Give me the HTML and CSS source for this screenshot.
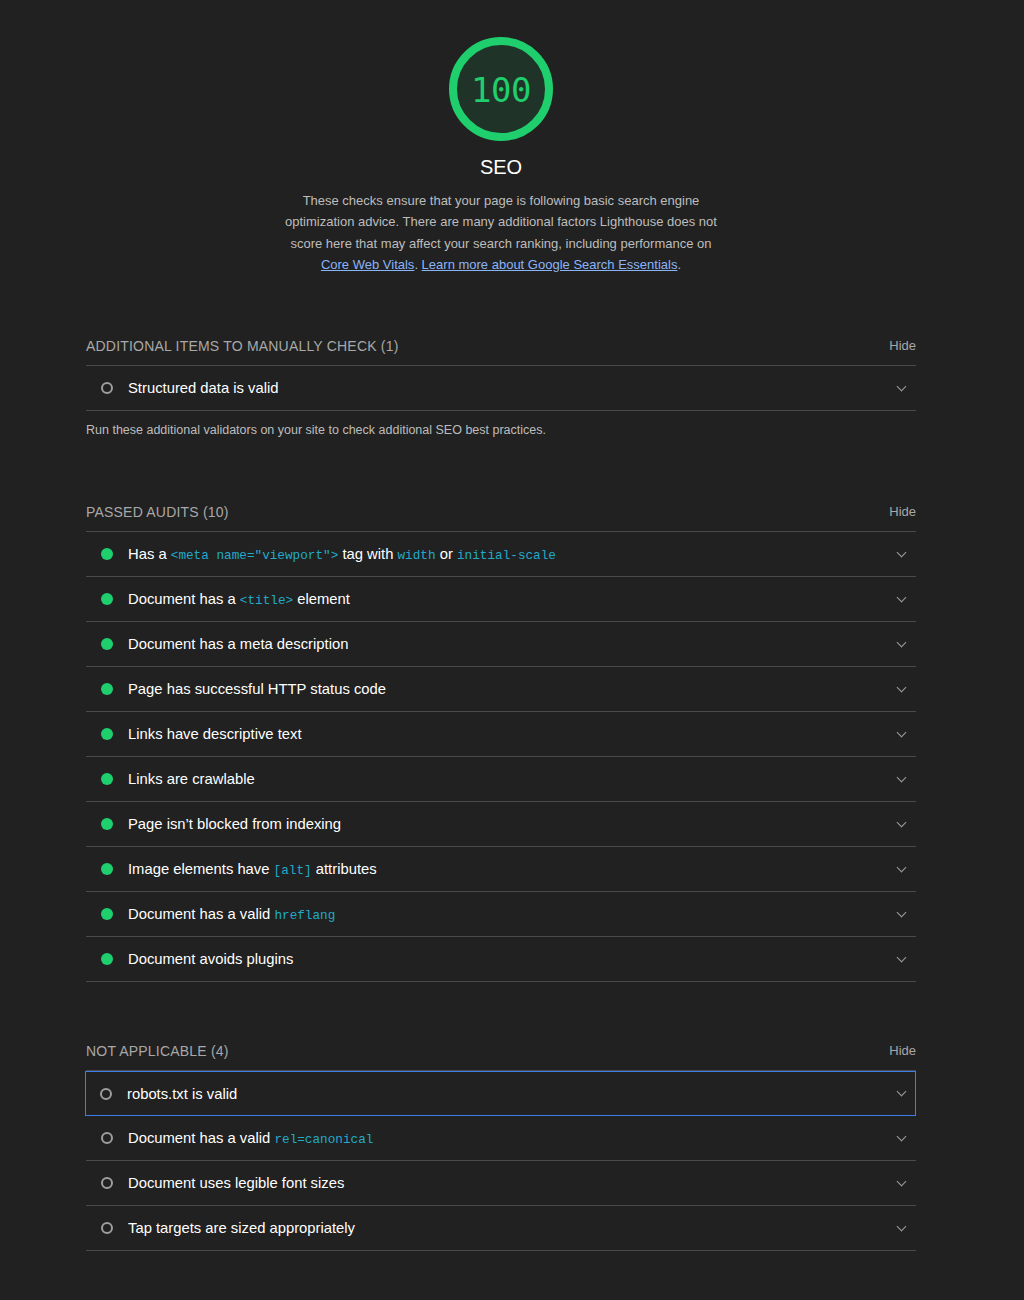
FILE: index.html
```html
<!DOCTYPE html>
<html lang="en">
<head>
<meta charset="utf-8">
<title>SEO</title>
<link rel="stylesheet" href="styles.css">
</head>
<body>
<div class="report">
  <header class="cat-header">
    <div class="gauge">
      <svg class="gauge-svg" viewBox="0 0 104 104" width="104" height="104">
        <circle cx="52" cy="52" r="48" fill="#203328" stroke="#1fce6c" stroke-width="8"/>
      </svg>
      <span class="gauge-value">100</span>
    </div>
    <h1 class="cat-title">SEO</h1>
    <p class="cat-desc">These checks ensure that your page is following basic search engine optimization advice. There are many additional factors Lighthouse does not score here that may affect your search ranking, including performance on <a href="#">Core Web Vitals</a>. <a href="#">Learn more about Google Search Essentials</a>.</p>
  </header>

  <section class="group group-first">
    <div class="group-head">
      <span class="group-title">Additional items to manually check (1)</span>
      <span class="group-hide">Hide</span>
    </div>
    <div class="audit"><span class="ico ico-na"></span><span class="audit-title">Structured data is valid</span><span class="chev"></span></div>
    <p class="group-desc">Run these additional validators on your site to check additional SEO best practices.</p>
  </section>

  <section class="group group-passed">
    <div class="group-head">
      <span class="group-title">Passed audits (10)</span>
      <span class="group-hide">Hide</span>
    </div>
    <div class="audit"><span class="ico ico-pass"></span><span class="audit-title">Has a <code>&lt;meta name="viewport"&gt;</code> tag with <code>width</code> or <code>initial-scale</code></span><span class="chev"></span></div>
    <div class="audit"><span class="ico ico-pass"></span><span class="audit-title">Document has a <code>&lt;title&gt;</code> element</span><span class="chev"></span></div>
    <div class="audit"><span class="ico ico-pass"></span><span class="audit-title">Document has a meta description</span><span class="chev"></span></div>
    <div class="audit"><span class="ico ico-pass"></span><span class="audit-title">Page has successful HTTP status code</span><span class="chev"></span></div>
    <div class="audit"><span class="ico ico-pass"></span><span class="audit-title">Links have descriptive text</span><span class="chev"></span></div>
    <div class="audit"><span class="ico ico-pass"></span><span class="audit-title">Links are crawlable</span><span class="chev"></span></div>
    <div class="audit"><span class="ico ico-pass"></span><span class="audit-title">Page isn’t blocked from indexing</span><span class="chev"></span></div>
    <div class="audit"><span class="ico ico-pass"></span><span class="audit-title">Image elements have <code>[alt]</code> attributes</span><span class="chev"></span></div>
    <div class="audit"><span class="ico ico-pass"></span><span class="audit-title">Document has a valid <code>hreflang</code></span><span class="chev"></span></div>
    <div class="audit"><span class="ico ico-pass"></span><span class="audit-title">Document avoids plugins</span><span class="chev"></span></div>
  </section>

  <section class="group group-na">
    <div class="group-head">
      <span class="group-title">Not applicable (4)</span>
      <span class="group-hide">Hide</span>
    </div>
    <div class="audit audit-focus"><span class="ico ico-na"></span><span class="audit-title">robots.txt is valid</span><span class="chev"></span></div>
    <div class="audit"><span class="ico ico-na"></span><span class="audit-title">Document has a valid <code>rel=canonical</code></span><span class="chev"></span></div>
    <div class="audit"><span class="ico ico-na"></span><span class="audit-title">Document uses legible font sizes</span><span class="chev"></span></div>
    <div class="audit"><span class="ico ico-na"></span><span class="audit-title">Tap targets are sized appropriately</span><span class="chev"></span></div>
  </section>
</div>
</body>
</html>
```

FILE: styles.css
```css
html, body {
  margin: 0;
  padding: 0;
  background: #212121;
}
body {
  font-family: "Liberation Sans", Arial, Helvetica, sans-serif;
  color: #f2f2f2;
  height: 1300px;
}
.report {
  width: 830px;
  margin: 0 0 0 86px;
  padding-top: 37px;
}
.cat-header {
  display: flex;
  flex-direction: column;
  align-items: center;
}
.gauge {
  position: relative;
  width: 104px;
  height: 104px;
}
.gauge-svg {
  display: block;
}
.gauge-value {
  position: absolute;
  inset: 0;
  display: flex;
  align-items: center;
  justify-content: center;
  font-family: "DejaVu Sans Mono", "Liberation Mono", monospace;
  font-size: 34px;
  letter-spacing: -0.5px;
  color: #1fce6c;
  padding-top: 1px;
}
.cat-title {
  margin: 14px 0 0;
  font-size: 20px;
  line-height: 24px;
  font-weight: 400;
  color: #ffffff;
}
.cat-desc {
  margin: 11px 0 0;
  width: 440px;
  text-align: center;
  font-size: 13px;
  line-height: 21.3px;
  color: #bdbdbd;
}
.cat-desc a {
  color: #8ab4f8;
  text-decoration: underline;
}
.group-first {
  margin-top: 51px;
}
.group-passed {
  margin-top: 55px;
}
.group-na {
  margin-top: 49px;
}
.group-head {
  display: flex;
  justify-content: space-between;
  align-items: center;
  height: 40px;
  border-bottom: 1px solid #4a4a4a;
  box-sizing: border-box;
}
.group-title {
  text-transform: uppercase;
  font-size: 14px;
  letter-spacing: 0.2px;
  color: #a8a8a8;
}
.group-hide {
  font-size: 13px;
  color: #a8a8a8;
}
.audit {
  display: flex;
  align-items: center;
  height: 45px;
  border-bottom: 1px solid #4a4a4a;
  box-sizing: border-box;
  padding: 0 10px 0 15px;
}
.audit.audit-focus {
  border: 1px solid #3f7de8;
  padding-left: 14px;
  padding-right: 9px;
  margin-left: -1px;
}
.ico {
  width: 12px;
  height: 12px;
  border-radius: 50%;
  box-sizing: border-box;
  flex: none;
  margin-right: 15px;
}
.ico-pass {
  background: #1fce6c;
}
.ico-na {
  border: 2px solid #9e9e9e;
}
.audit-title {
  flex: 1;
  font-size: 14.8px;
  color: #ffffff;
}
.audit-title code {
  font-family: "Liberation Mono", "DejaVu Sans Mono", monospace;
  font-size: 12.7px;
  color: #22aac9;
}
.chev {
  width: 6px;
  height: 6px;
  border-right: 1.7px solid #9e9e9e;
  border-bottom: 1.7px solid #9e9e9e;
  transform: rotate(45deg);
  margin-top: -4px;
  margin-right: 1px;
  flex: none;
}
.group-desc {
  margin: 12px 0 0;
  font-size: 12.5px;
  color: #bdbdbd;
}
```
